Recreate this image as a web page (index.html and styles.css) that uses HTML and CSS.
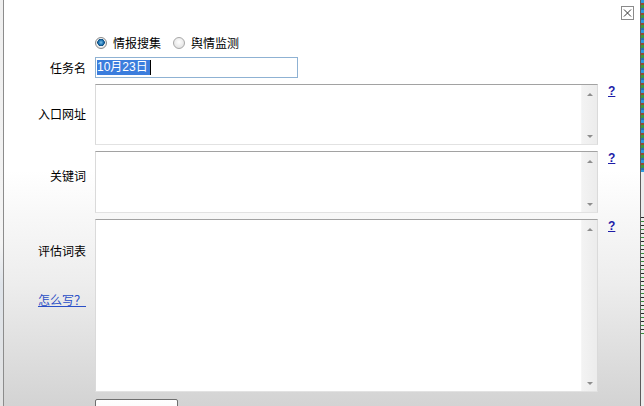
FILE: index.html
```html
<!DOCTYPE html>
<html lang="zh-CN">
<head>
<meta charset="utf-8">
<title>任务</title>
<link rel="stylesheet" href="styles.css">
</head>
<body>
<div class="screen">
  <div class="edge-left"></div>
  <div class="dialog">
    <div class="titlebar">
      <span class="close" title="关闭">
        <svg width="13" height="14" viewBox="0 0 13 14"><rect x="0.5" y="0.5" width="12" height="13" fill="#fff" stroke="#8a8a8a"/><path d="M3 3.5 L10 10.5 M10 3.5 L3 10.5" stroke="#333" stroke-width="1"/></svg>
      </span>
    </div>
    <div class="form">
      <div class="label"></div>
      <div class="radios">
        <label class="radio"><span class="dot on"></span>情报搜集</label>
        <label class="radio"><span class="dot"></span>舆情监测</label>
      </div>
      <div></div>

      <div class="label mid">任务名</div>
      <div class="field"><div class="input"><span class="sel">10月23日</span><span class="caret"></span></div></div>
      <div></div>

      <div class="label l-url">入口网址</div>
      <div class="area a1"><div class="sb"><span class="up"></span><span class="down"></span></div></div>
      <div class="help"><a href="#">?</a></div>

      <div class="label l-kw">关键词</div>
      <div class="area a2"><div class="sb"><span class="up"></span><span class="down"></span></div></div>
      <div class="help"><a href="#">?</a></div>

      <div class="label l-dict">
        <span>评估词表</span>
        <a class="how" href="#">怎么写？</a>
      </div>
      <div class="area a3"><div class="sb"><span class="up"></span><span class="down"></span></div></div>
      <div class="help"><a href="#">?</a></div>

      <div class="label"></div>
      <div class="btnrow"><button class="btn" type="button"></button></div>
      <div></div>
    </div>
  </div>
  <div class="edge-right"><div class="stripes"></div><div class="marks"></div></div>
</div>
</body>
</html>
```

FILE: styles.css
```css
* { box-sizing: border-box; }
html, body { margin: 0; padding: 0; }
body {
  width: 644px;
  height: 406px;
  overflow: hidden;
  font-family: "Noto Sans CJK SC", "DejaVu Sans", sans-serif;
  font-size: 12px;
  color: #000;
}
.screen {
  display: flex;
  width: 644px;
  height: 406px;
  overflow: hidden;
}
.edge-left {
  width: 3px;
  flex-shrink: 0;
  background: linear-gradient(to bottom, #efefef 0%, #f4f4f4 60%, #dfe4ea 70%, #e2e2e2 100%);
}
.dialog {
  width: 638px;
  height: 406px;
  flex-shrink: 0;
  overflow: hidden;
  border-left: 1px solid #8c8c8c;
  border-right: 1px solid #5c5c5c;
  background: linear-gradient(to bottom, #ffffff 0%, #ffffff 42%, #ededed 70%, #d3d3d3 100%);
  display: flex;
  flex-direction: column;
}
.edge-right {
  width: 3px;
  flex-shrink: 0;
  display: flex;
  flex-direction: column;
  background: #ececec;
}
.stripes {
  height: 172px;
  flex-shrink: 0;
  background: repeating-linear-gradient(to bottom, #2f9be0 0 3px, #9a4a32 3px 5px, #3f9a3a 5px 8px, #2d6fb0 8px 10px);
}
.marks {
  flex-shrink: 0;
  margin-top: 45px;
  height: 120px;
  background: repeating-linear-gradient(to bottom, #2a2a2a 0 1px, transparent 1px 4px, #3a8a3a 4px 5px, transparent 5px 8px);
}
.titlebar {
  height: 34px;
  flex-shrink: 0;
  display: flex;
  justify-content: flex-end;
  padding: 6px 6px 0 0;
}
.close { display: block; width: 13px; height: 14px; line-height: 0; }

.form {
  flex-shrink: 0;
  display: grid;
  grid-template-columns: 91px 503px 1fr;
  grid-template-rows: 17px 21px 61px 62px 173px 24px;
  row-gap: 6px;
}
.label {
  text-align: right;
  padding-right: 9px;
  line-height: 16px;
  white-space: nowrap;
}
.label.mid { align-self: center; }
.l-url { padding-top: 22px; }
.l-kw { padding-top: 17px; }
.l-dict {
  display: flex;
  flex-direction: column;
  align-items: flex-end;
  padding-top: 24px;
  gap: 33px;
}
.how {
  color: #2a4fc6;
  text-decoration: underline;
}

.radios {
  display: flex;
  align-items: center;
  gap: 12px;
  line-height: 16px;
}
.radio {
  display: flex;
  align-items: center;
  gap: 6px;
}
.dot {
  width: 12px;
  height: 12px;
  border-radius: 50%;
  border: 1px solid #a8a8a8;
  background: radial-gradient(circle at 50% 40%, #ffffff 0%, #e6e6e6 70%, #d0d0d0 100%);
  display: inline-block;
}
.dot.on {
  border-color: #8a8a8a;
  background: radial-gradient(circle at 50% 45%, #7ec2ea 0, #1b6fae 2.5px, #0d4a7a 3.5px, #f4f4f4 4px, #dcdcdc 6px);
}

.input {
  width: 203px;
  height: 21px;
  border: 1px solid #8fb2d3;
  background: #fff;
  display: flex;
  align-items: center;
  padding-left: 1px;
  font-family: "Liberation Sans", "Noto Sans CJK SC", sans-serif;
  font-size: 12px;
}
.sel {
  background: #3b7ddd;
  color: #fff;
  line-height: 15px;
  padding-right: 2px;
}
.caret {
  width: 1px;
  height: 15px;
  background: #000;
}

.area {
  background: #fff;
  border-top: 1px solid #a2a2a2;
  border-left: 1px solid #dadada;
  border-right: 1px solid #dadada;
  border-bottom: 1px solid #e2e2e2;
  display: flex;
  justify-content: flex-end;
}
.sb {
  width: 16px;
  background: linear-gradient(to right, #f3f3f3, #ececec);
  border-left: 1px solid #f6f6f6;
  display: flex;
  flex-direction: column;
  justify-content: space-between;
  align-items: center;
  padding: 8px 0 6px;
}
.up, .down {
  width: 0;
  height: 0;
  border-left: 3px solid transparent;
  border-right: 3px solid transparent;
}
.up { border-bottom: 3px solid #8e8e8e; }
.down { border-top: 3px solid #8e8e8e; }

.help {
  padding-left: 10px;
  padding-top: 0;
  line-height: 11px;
}
.help a {
  color: #1c1ca8;
  font-family: "Liberation Sans", sans-serif;
  font-weight: bold;
  font-size: 12px;
  text-decoration: underline;
}

.btnrow { display: flex; align-items: flex-start; padding-top: 1px; }
.btn {
  width: 83px;
  height: 24px;
  border: 1px solid #6f6f6f;
  border-radius: 2px 2px 0 0;
  background: linear-gradient(#ffffff, #f2f2f2);
  margin: 0;
  padding: 0;
}
```
